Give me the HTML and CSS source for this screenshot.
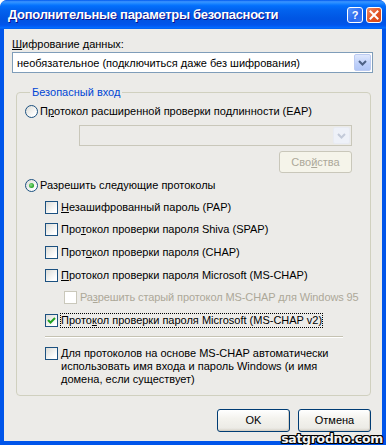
FILE: index.html
```html
<!DOCTYPE html>
<html lang="ru">
<head>
    <meta charset="UTF-8">
    <title>Дополнительные параметры безопасности</title>
    <link rel="stylesheet" href="styles.css">
</head>
<body>
    <div class="window">
        <div class="titlebar">
            <span class="title">Дополнительные параметры безопасности</span>
            <span class="tb-btn tb-help">?</span>
            <span class="tb-btn tb-close">
                <svg width="10" height="10" viewBox="0 0 10 10"><path d="M1.5 1.5 L8.5 8.5 M8.5 1.5 L1.5 8.5" stroke="#fff" stroke-width="2" stroke-linecap="square"/></svg>
            </span>
        </div>
        <div class="client">
            <div class="field-label"><u>Ш</u>ифрование данных:</div>
            <div class="combo">
                <span class="combo-text">необязательное (подключиться даже без шифрования)</span>
                <span class="combo-btn">
                    <svg width="9" height="6" viewBox="0 0 9 6"><path d="M1 1 L4.5 4.5 L8 1" fill="none" stroke="#4d6185" stroke-width="2"/></svg>
                </span>
            </div>

            <fieldset class="group">
                <legend>Безопасный вход</legend>

                <div class="opt">
                    <span class="radio"></span>
                    <span>П<u>р</u>отокол расширенной проверки подлинности (EAP)</span>
                </div>
                <div class="combo combo-disabled eap-combo">
                    <span class="combo-text"></span>
                    <span class="combo-btn">
                        <svg width="9" height="6" viewBox="0 0 9 6"><path d="M1 1 L4.5 4.5 L8 1" fill="none" stroke="#c3cad9" stroke-width="2"/></svg>
                    </span>
                </div>
                <div class="props-row">
                    <span class="btn btn-disabled">Сво<u>й</u>ства</span>
                </div>

                <div class="opt opt-second">
                    <span class="radio checked"></span>
                    <span>Разрешить сле<u>д</u>ующие протоколы</span>
                </div>

                <div class="protocols">
                    <div class="check-row">
                        <span class="check"></span>
                        <span><u>Н</u>езашифрованный пароль (PAP)</span>
                    </div>
                    <div class="check-row">
                        <span class="check"></span>
                        <span>Про<u>т</u>окол проверки пароля Shiva (SPAP)</span>
                    </div>
                    <div class="check-row">
                        <span class="check"></span>
                        <span>Прот<u>о</u>кол проверки пароля (CHAP)</span>
                    </div>
                    <div class="check-row">
                        <span class="check"></span>
                        <span><u>П</u>ротокол проверки пароля Microsoft (MS-CHAP)</span>
                    </div>
                    <div class="check-row sub disabled">
                        <span class="check"></span>
                        <span>Ра<u>з</u>решить старый протокол MS-CHAP для Windows 95</span>
                    </div>
                    <div class="check-row">
                        <span class="check checked">
                            <svg width="9" height="9" viewBox="0 0 9 9"><path d="M1 4 L3.5 6.5 L8 2" fill="none" stroke="#21a121" stroke-width="2"/></svg>
                        </span>
                        <span class="focused">Прото<u>к</u>ол проверки пароля Microsoft (MS-CHAP v2)</span>
                    </div>
                </div>

                <div class="sep"></div>

                <div class="check-row multi">
                    <span class="check"></span>
                    <span><u>Д</u>ля протоколов на основе MS-CHAP автоматически<br>использовать имя входа и пароль Windows (и имя<br>домена, если существует)</span>
                </div>
            </fieldset>

            <div class="buttons">
                <button class="btn">OK</button>
                <button class="btn">Отмена</button>
            </div>
        </div>
        <div class="watermark">satgrodno.com</div>
    </div>
</body>
</html>
```

FILE: styles.css
```css
body {
    margin: 0;
    padding: 0;
    background: #fff;
    font-family: "Liberation Sans", Arial, sans-serif;
    font-size: 11px;
    color: #000;
}
.window {
    position: relative;
    width: 386px;
    height: 445px;
    box-sizing: border-box;
    background: #0055ea;
    border-radius: 7px 7px 0 0;
    display: flex;
    flex-direction: column;
    padding: 0 4px 4px 4px;
    overflow: hidden;
}
.titlebar {
    height: 29px;
    margin: 0 -4px;
    padding: 0 4px 0 8px;
    display: flex;
    align-items: center;
    background: linear-gradient(to bottom, #0058ee 0%, #3a93ff 6%, #288eff 10%, #127dff 15%, #036ffc 20%, #0262ee 35%, #0057e5 60%, #0054e3 70%, #0055eb 85%, #005bf5 90%, #026afe 95%, #0062ef 100%);
    border-radius: 7px 7px 0 0;
}
.title {
    flex: 1;
    color: #fff;
    font-weight: bold;
    font-size: 13px;
    text-shadow: 1px 1px #0f1089;
    letter-spacing: -0.3px;
}
.tb-btn {
    width: 16px;
    height: 16px;
    box-sizing: border-box;
    border: 1px solid #fff;
    border-radius: 3px;
    display: flex;
    align-items: center;
    justify-content: center;
    color: #fff;
    font-weight: bold;
    font-size: 11px;
    margin-left: 3px;
}
.tb-help {
    background: linear-gradient(135deg, #5a94f9, #2a6af0 60%, #3f7cf4);
}
.tb-close {
    background: linear-gradient(135deg, #f08a64, #e0501f 60%, #d64718);
}
.client {
    flex: 1;
    background: #ecebe8;
    padding: 9px 9px 0 8px;
}
.field-label {
    line-height: 13px;
}
.combo {
    margin-top: 1px;
    height: 21px;
    box-sizing: border-box;
    border: 1px solid #7f9db9;
    background: #fff;
    display: flex;
    align-items: center;
    padding: 1px;
}
.combo-text {
    flex: 1;
    padding-left: 3px;
    white-space: nowrap;
}
.combo-btn {
    width: 17px;
    height: 17px;
    box-sizing: border-box;
    border: 1px solid #bccbf2;
    border-radius: 2px;
    background: linear-gradient(to bottom, #dfe8fd, #bdcffa 60%, #b1c6f6);
    display: flex;
    align-items: center;
    justify-content: center;
}
.combo-disabled {
    border-color: #c9c7ba;
    background: #ecebe8;
}
.combo-disabled .combo-btn {
    border-color: #e8ebf3;
    background: #eef1f8;
}
.group {
    margin: 13px 2px 0 4px;
    padding: 6px 8px 9px 8px;
    border: 1px solid #d0d0bf;
    border-radius: 4px;
    min-width: 0;
}
.group legend {
    color: #0046d5;
    line-height: 13px;
    padding: 0 2px;
    margin-left: 5px;
}
.opt {
    display: flex;
    align-items: center;
    gap: 2px;
    height: 13px;
    line-height: 13px;
    white-space: nowrap;
}
.opt-second {
    margin-top: 6px;
}
.radio {
    width: 13px;
    height: 13px;
    box-sizing: border-box;
    border: 1px solid #1c5180;
    border-radius: 50%;
    background: linear-gradient(135deg, #dcdcd7, #fff 80%);
    display: flex;
    align-items: center;
    justify-content: center;
}
.radio.checked::after {
    content: "";
    width: 5px;
    height: 5px;
    border-radius: 50%;
    background: radial-gradient(circle at 40% 40%, #8ee08e, #21a121 70%);
}
.eap-combo {
    margin: 7px 0 0 54px;
    width: 273px;
}
.props-row {
    margin-top: 5px;
    padding-left: 254px;
}
.btn {
    width: 73px;
    height: 23px;
    box-sizing: border-box;
    border: 1px solid #003c74;
    border-radius: 3px;
    background: linear-gradient(to bottom, #fff, #f4f3ee 40%, #ecebe6 86%, #d6d0c5);
    box-shadow: inset -1px -1px 0 #d6d0c5;
    font-family: "Liberation Sans", Arial, sans-serif;
    font-size: 11px;
    color: #000;
    display: inline-flex;
    align-items: center;
    justify-content: center;
    padding: 0;
}
.btn-disabled {
    height: 22px;
    border-color: #c9c7ba;
    background: #f5f4ea;
    box-shadow: none;
    color: #aca899;
}
.protocols {
    margin: 4px 0 0 20px;
}
.check-row {
    display: flex;
    align-items: center;
    gap: 3px;
    height: 22.6px;
    line-height: 13px;
    white-space: nowrap;
}
.check-row.sub {
    margin-left: 19px;
    letter-spacing: -0.1px;
}
.check-row.disabled {
    color: #aca899;
}
.check {
    width: 13px;
    height: 13px;
    box-sizing: border-box;
    border: 1px solid #1c5180;
    background: linear-gradient(135deg, #dcdcd7, #fff 80%);
    display: flex;
    align-items: center;
    justify-content: center;
    flex-shrink: 0;
}
.disabled .check {
    border-color: #cac8bb;
    background: #fff;
}
.focused {
    outline: 1px dotted #000;
}
.sep {
    margin: 4px 0 0 20px;
    width: 298px;
    height: 1px;
    background: #c5c2b2;
    border-bottom: 1px solid #fff;
}
.check-row.multi {
    height: auto;
    align-items: flex-start;
    margin: 9px 0 0 20px;
}
.buttons {
    display: flex;
    justify-content: flex-end;
    gap: 8px;
    margin: 13px 2px 0 0;
}
.watermark {
    position: absolute;
    right: 3px;
    bottom: -1px;
    font-family: "DejaVu Sans", sans-serif;
    font-weight: bold;
    font-size: 12.5px;
    letter-spacing: -0.3px;
    color: #f2f2f2;
    text-shadow: 1px 0 #000, -1px 0 #000, 0 1px #000, 0 -1px #000, 1px 1px #000, -1px -1px #000, 1px -1px #000, -1px 1px #000;
}
```
